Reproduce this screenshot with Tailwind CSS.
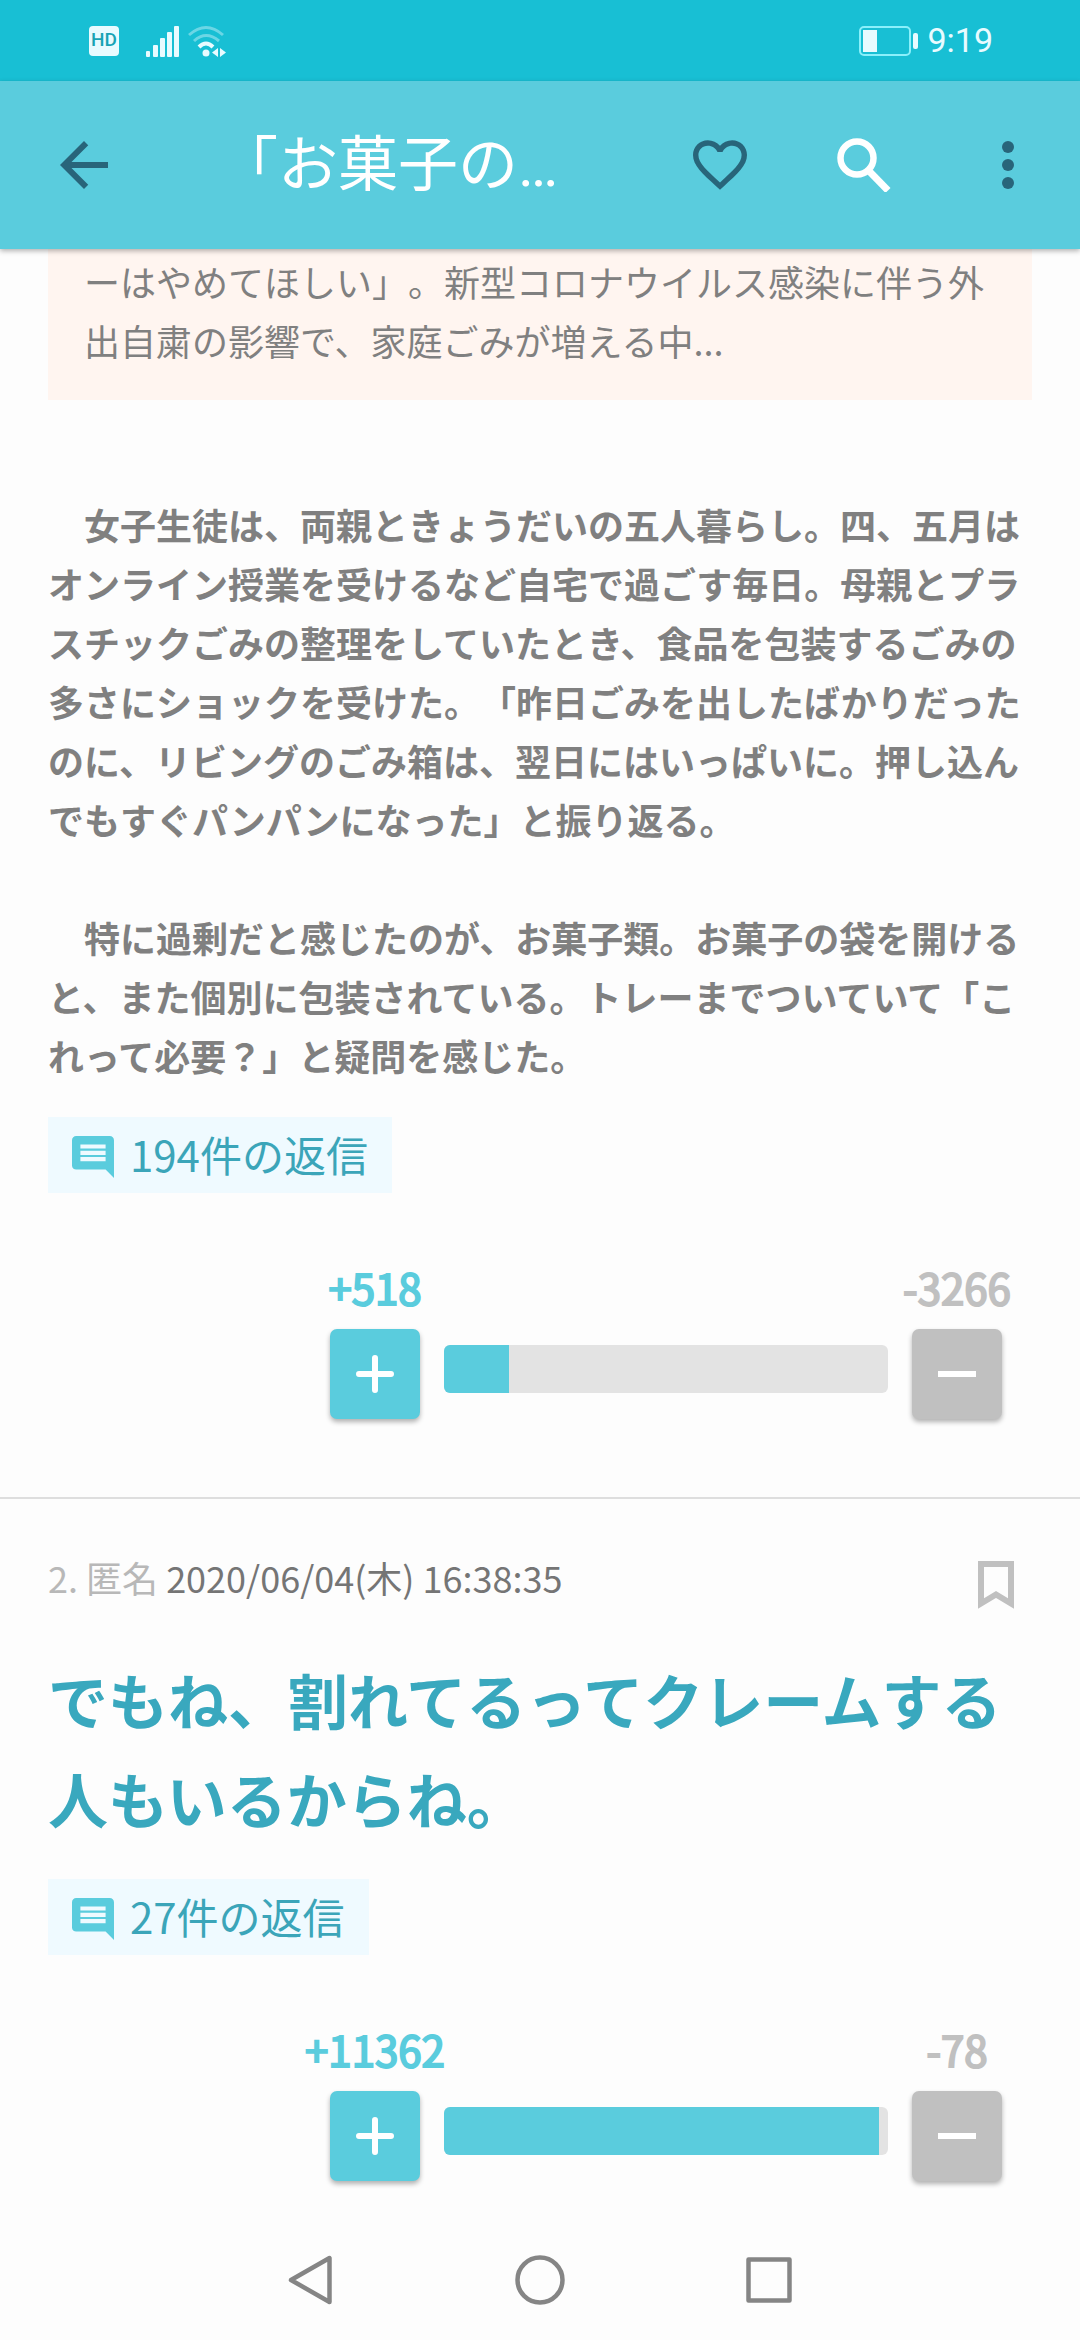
<!DOCTYPE html>
<html lang="ja">
<head>
<meta charset="utf-8">
<meta name="viewport" content="width=device-width, initial-scale=1">
<title>「お菓子の…</title>
<script src="https://cdn.jsdelivr.net/npm/@tailwindcss/browser@4"></script>
</head>
<body class="flex min-h-screen flex-col bg-[#fdfdfd] font-['Noto_Sans_CJK_JP',sans-serif] text-[#808080] [text-spacing-trim:space-all]">

<!-- Status bar -->
<div class="flex h-[81px] items-center bg-[#18bfd4] pr-[87px] pl-[89px] text-[#e8fbff]">
  <span class="flex h-[30px] w-[30px] items-center justify-center rounded-[4px] bg-[#e8fbff] font-['Roboto',sans-serif] text-[19px] font-medium text-[#18a3b5]">HD</span>
  <svg class="ml-[26px] h-[32px] w-[36px]" viewBox="0 0 36 32" fill="currentColor" aria-hidden="true">
    <rect x="1" y="26" width="4" height="6" rx="1"/><rect x="8" y="20" width="5" height="12" rx="1"/><rect x="15" y="13" width="5" height="19" rx="1"/><rect x="22" y="7" width="5" height="25" rx="1"/><rect x="29" y="1" width="5" height="31" rx="1"/>
  </svg>
  <svg class="ml-[7px] h-[32px] w-[38px]" viewBox="0 0 38 32" fill="none" stroke="currentColor" stroke-width="3" aria-hidden="true">
    <path d="M1 10Q18 -5 35 10" opacity=".4"/><path d="M6 16Q18 5 31 16" opacity=".4"/><path d="M11 22Q18 15 25 22" stroke-width="4"/>
    <circle cx="18" cy="28" r="3.500" fill="currentColor" stroke="none"/><path d="M30 23v9l-6-4.500zM32 23v9l6-4.500z" fill="currentColor" stroke="none"/>
  </svg>
  <svg class="ml-auto h-[30px] w-[60px]" viewBox="0 0 60 30" fill="none" aria-hidden="true">
    <rect x="1" y="1" width="50" height="28" rx="4" stroke="#8af0fb" stroke-width="2"/><rect x="4" y="4" width="14" height="22" fill="currentColor"/><rect x="54" y="7" width="5" height="16" rx="2" fill="currentColor"/>
  </svg>
  <span class="ml-2 font-['Roboto',sans-serif] text-[34px]">9:19</span>
</div>

<!-- App bar -->
<header class="z-10 flex h-[168px] items-center bg-[#5accdd] pr-9 pl-12 text-[#28657a] shadow-[0_2px_5px_rgba(0,0,0,0.3)]">
  <button type="button" aria-label="戻る"><svg class="h-[72px] w-[72px]" viewBox="0 0 24 24" fill="currentColor"><path d="M20 11H7.830l5.590-5.590L12 4l-8 8 8 8 1.410-1.410L7.830 13H20z"/></svg></button>
  <h1 class="ml-[98px] min-w-0 flex-1 pb-1 whitespace-nowrap text-[60px] text-white">「お菓子の<span class="font-['Roboto',sans-serif]">…</span></h1>
  <button type="button" aria-label="お気に入り"><svg class="h-[50px] w-[54px]" viewBox="2 3 20 18.350" fill="currentColor"><path d="M16.500 3c-1.740 0-3.410.810-4.500 2.090C10.910 3.810 9.240 3 7.500 3 4.420 3 2 5.420 2 8.500c0 3.780 3.400 6.860 8.550 11.540L12 21.350l1.450-1.320C18.600 15.360 22 12.280 22 8.500 22 5.420 19.580 3 16.500 3zm-4.400 15.550l-.1.100-.1-.1C7.140 14.240 4 11.390 4 8.500 4 6.500 5.500 5 7.500 5c1.540 0 3.040.990 3.570 2.360h1.870C13.460 5.990 14.960 5 16.500 5c2 0 3.500 1.500 3.500 3.500 0 2.890-3.140 5.740-7.900 10.050z"/></svg></button>
  <button type="button" aria-label="検索" class="ml-[90px]"><svg class="h-[54px] w-[54px]" viewBox="0 0 54 54" fill="none" stroke="#fff"><circle cx="20" cy="20" r="16.500" stroke-width="6.500"/><path d="M33 34L51 52.500" stroke-width="7"/></svg></button>
  <button type="button" aria-label="メニュー" class="ml-[81px]"><svg class="h-[72px] w-[72px]" viewBox="0 0 24 24" fill="currentColor"><circle cx="12" cy="6" r="2"/><circle cx="12" cy="12" r="2"/><circle cx="12" cy="18" r="2"/></svg></button>
</header>

<main class="flex-1">
  <article class="border-b-2 border-[#dedede] px-12 pb-[78px]">
    <blockquote class="bg-[#fff5f0] px-9 pt-[3px] pb-[30px] text-[36px] leading-[59px]">ーはやめてほしい」。新型コロナウイルス感染に伴う外出自粛の影響で、家庭ごみが増える中...</blockquote>
    <div class="mt-[95px] text-[36px] leading-[59px] font-bold">
      <p>　女子生徒は、両親ときょうだいの五人暮らし。四、五月はオンライン授業を受けるなど自宅で過ごす毎日。母親とプラスチックごみの整理をしていたとき、食品を包装するごみの多さにショックを受けた。「昨日ごみを出したばかりだったのに、リビングのごみ箱は、翌日にはいっぱいに。押し込んでもすぐパンパンになった」と振り返る。</p>
      <p class="mt-[59px]">　特に過剰だと感じたのが、お菓子類。お菓子の袋を開けると、また個別に包装されている。トレーまでついていて「これって必要？」と疑問を感じた。</p>
    </div>
    <a href="#replies-1" class="mt-8 flex h-[76px] w-fit items-center gap-4 bg-[#effaff] px-6 text-[42px] text-[#3ba5b9]">
      <svg class="mt-1 h-[42px] w-[42px] text-[#5accdd]" viewBox="2 2 20 20" fill="currentColor" aria-hidden="true"><path d="M21.990 4c0-1.100-.890-2-1.990-2H4c-1.100 0-2 .9-2 2v12c0 1.100.9 2 2 2h14l4 4-.010-18zM18 14H6v-2h12v2zm0-3H6V9h12v2zm0-3H6V6h12v2z"/></svg>
      <span class="pb-1">194件の返信</span>
    </a>
    <div class="mt-16 flex items-end gap-6 pr-[30px] pl-[282px]">
      <div class="flex w-[90px] flex-col items-center gap-3 text-[42px] leading-[60px] text-[#5accdd]">
        <span class="whitespace-nowrap [-webkit-text-stroke:2px]">+518</span>
        <button type="button" aria-label="プラス" class="flex h-[90px] w-[90px] items-center justify-center rounded-[7px] bg-[#5accdd] shadow-[0_3px_5px_rgba(0,0,0,0.3)]"><svg class="h-[38px] w-[38px]" viewBox="0 0 38 38" stroke="#fff" stroke-width="6" stroke-linecap="round"><path d="M3 19h32M19 3v32"/></svg></button>
      </div>
      <div role="progressbar" aria-label="プラスの割合" aria-valuenow="14" class="mb-[26px] h-12 flex-1 overflow-hidden rounded-[6px] bg-[#e3e3e3]"><div class="h-full bg-[#5accdd]" style="width:14.6%"></div></div>
      <div class="flex w-[90px] flex-col items-center gap-3 text-[42px] leading-[60px] text-[#c0c0c0]">
        <span class="whitespace-nowrap [-webkit-text-stroke:2px]">-3266</span>
        <button type="button" aria-label="マイナス" class="flex h-[90px] w-[90px] items-center justify-center rounded-[7px] bg-[#c0c0c0] shadow-[0_3px_5px_rgba(0,0,0,0.3)]"><svg class="h-[38px] w-[38px]" viewBox="0 0 38 38" stroke="#fff" stroke-width="6"><path d="M0 19h38"/></svg></button>
      </div>
    </div>
  </article>

  <article class="px-12 pt-[46px] pb-[39px]">
    <div class="flex items-center justify-between pr-[18px] text-[36px] leading-[60px]">
      <p><span class="text-[#b8b8b8]">2. 匿名</span> <time datetime="2020-06-04T16:38:35" class="text-[#757575]">2020/06/04(木) 16:38:35</time></p>
      <button type="button" aria-label="ブックマーク" class="pt-4"><svg class="h-12 w-9" viewBox="0 0 36 48" fill="none" stroke="#c0c0c0" stroke-width="6"><path d="M3 3h30v39.500L18 33.500 3 42.500z"/></svg></button>
    </div>
    <p class="mt-10 text-[60px] leading-[99px] font-bold text-[#39a8be]">でもね、割れてるってクレームする人もいるからね。</p>
    <a href="#replies-2" class="mt-8 flex h-[76px] w-fit items-center gap-4 bg-[#effaff] px-6 text-[42px] text-[#3ba5b9]">
      <svg class="mt-1 h-[42px] w-[42px] text-[#5accdd]" viewBox="2 2 20 20" fill="currentColor" aria-hidden="true"><path d="M21.990 4c0-1.100-.890-2-1.990-2H4c-1.100 0-2 .9-2 2v12c0 1.100.9 2 2 2h14l4 4-.010-18zM18 14H6v-2h12v2zm0-3H6V9h12v2zm0-3H6V6h12v2z"/></svg>
      <span class="pb-1">27件の返信</span>
    </a>
    <div class="mt-16 flex items-end gap-6 pr-[30px] pl-[282px]">
      <div class="flex w-[90px] flex-col items-center gap-3 text-[42px] leading-[60px] text-[#5accdd]">
        <span class="whitespace-nowrap [-webkit-text-stroke:2px]">+11362</span>
        <button type="button" aria-label="プラス" class="flex h-[90px] w-[90px] items-center justify-center rounded-[7px] bg-[#5accdd] shadow-[0_3px_5px_rgba(0,0,0,0.3)]"><svg class="h-[38px] w-[38px]" viewBox="0 0 38 38" stroke="#fff" stroke-width="6" stroke-linecap="round"><path d="M3 19h32M19 3v32"/></svg></button>
      </div>
      <div role="progressbar" aria-label="プラスの割合" aria-valuenow="98" class="mb-[26px] h-12 flex-1 overflow-hidden rounded-[6px] bg-[#e3e3e3]"><div class="h-full bg-[#5accdd]" style="width:98%"></div></div>
      <div class="flex w-[90px] flex-col items-center gap-3 text-[42px] leading-[60px] text-[#c0c0c0]">
        <span class="whitespace-nowrap [-webkit-text-stroke:2px]">-78</span>
        <button type="button" aria-label="マイナス" class="flex h-[90px] w-[90px] items-center justify-center rounded-[7px] bg-[#c0c0c0] shadow-[0_3px_5px_rgba(0,0,0,0.3)]"><svg class="h-[38px] w-[38px]" viewBox="0 0 38 38" stroke="#fff" stroke-width="6"><path d="M0 19h38"/></svg></button>
      </div>
    </div>
  </article>
</main>

<!-- System navigation -->
<nav class="flex h-[120px] items-center justify-center gap-[177px]" aria-label="システム">
  <button type="button" aria-label="戻る"><svg class="h-[52px] w-[52px]" viewBox="0 0 52 52" fill="none" stroke="#858585" stroke-width="4.500" stroke-linejoin="round"><path d="M44.500 4v44L6 26z"/></svg></button>
  <button type="button" aria-label="ホーム"><svg class="h-[52px] w-[52px]" viewBox="0 0 52 52" fill="none" stroke="#858585" stroke-width="4.500"><circle cx="26" cy="26" r="22.500"/></svg></button>
  <button type="button" aria-label="履歴"><svg class="h-[52px] w-[52px]" viewBox="0 0 52 52" fill="none" stroke="#858585" stroke-width="4.500" stroke-linejoin="round"><rect x="5.500" y="5.500" width="41" height="41"/></svg></button>
</nav>
</body>
</html>
